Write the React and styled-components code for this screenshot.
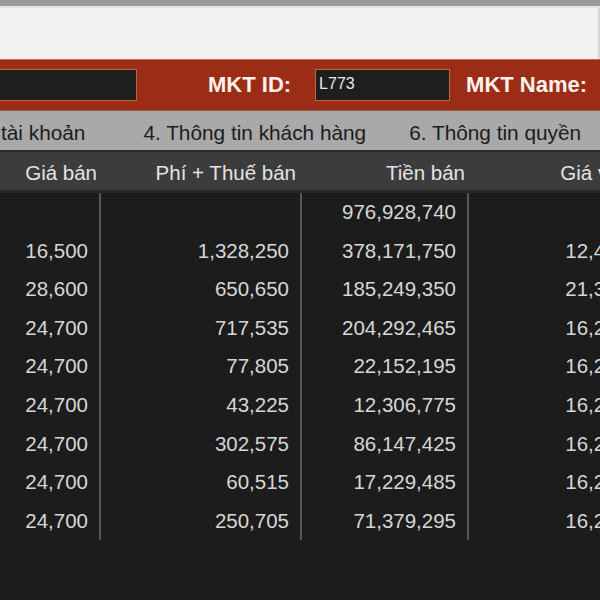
import React from 'react';
import styled, { createGlobalStyle } from 'styled-components';

const GlobalStyle = createGlobalStyle`
  html, body {
    margin: 0;
    padding: 0;
    background: #1c1c1c;
    overflow: hidden;
  }
  body {
    font-family: "Liberation Sans", Arial, sans-serif;
  }
`;

const Screen = styled.div`
  width: 600px;
  height: 600px;
  overflow: hidden;
  background: #1c1c1c;
  display: flex;
  flex-direction: column;
`;

const TopEdge = styled.div`
  height: 6px;
  background: #9c9c9c;
  border-bottom: 2px solid #e4e4e4;
`;

const BlankPane = styled.div`
  height: 51px;
  background: #f1f1f1;
  border-right: 2px solid #d6d6d6;
`;

const InfoBar = styled.div`
  height: 50px;
  background: #9b2d16;
  border-top: 1px solid #c0694f;
  display: flex;
  align-items: center;
`;

const Field = styled.div`
  width: ${p => p.$width}px;
  height: 32px;
  margin-left: ${p => p.$offset || 0}px;
  flex-shrink: 0;
  box-sizing: border-box;
  background: #1e1e1e;
  border: 1px solid #b9683f;
  color: #e8e8e8;
  font-size: 16px;
  line-height: 28px;
  padding-left: 3px;
`;

const Label = styled.span`
  margin-left: ${p => p.$gap}px;
  flex-shrink: 0;
  color: #fff2ec;
  font-weight: bold;
  font-size: 22px;
  white-space: nowrap;
`;

const TabStrip = styled.div`
  height: 42px;
  box-sizing: border-box;
  padding-top: 5px;
  background: #a9a9a9;
  border-top: 1px solid #8a5a4a;
  border-bottom: 2px solid #2b2b2b;
  display: flex;
  align-items: center;
`;

const Tab = styled.span`
  margin-left: ${p => p.$gap}px;
  flex-shrink: 0;
  color: #1c1c1c;
  font-size: 20.8px;
  white-space: nowrap;
`;

const Grid = styled.div`
  display: grid;
  grid-template-columns: 101px 201px 167px 170px;
  width: 639px;
`;

const HeadCell = styled.div`
  height: 38px;
  overflow: hidden;
  background: #3c3c3c;
  color: #e4e4e4;
  font-size: 20.5px;
  line-height: 42px;
  text-align: right;
  padding-right: ${p => p.$pad}px;
  white-space: nowrap;
  border-bottom: 3px solid #262626;
`;

const Cell = styled.div`
  height: 38.6px;
  color: #d6d6d6;
  font-size: 20.5px;
  line-height: 38.6px;
  text-align: right;
  padding-right: 11px;
  white-space: nowrap;
  border-right: ${p => (p.$last ? 'none' : '2px solid #565656')};
`;

const headers = [
  { label: 'Giá bán', pad: 4 },
  { label: 'Phí + Thuế bán', pad: 6 },
  { label: 'Tiền bán', pad: 4 },
  { label: 'Giá vốn', pad: 8 },
];

const rows = [
  ['', '', '976,928,740', ''],
  ['16,500', '1,328,250', '378,171,750', '12,450'],
  ['28,600', '650,650', '185,249,350', '21,350'],
  ['24,700', '717,535', '204,292,465', '16,250'],
  ['24,700', '77,805', '22,152,195', '16,250'],
  ['24,700', '43,225', '12,306,775', '16,250'],
  ['24,700', '302,575', '86,147,425', '16,250'],
  ['24,700', '60,515', '17,229,485', '16,250'],
  ['24,700', '250,705', '71,379,295', '16,250'],
];

export default function App() {
  return (
    <Screen>
      <GlobalStyle />
      <TopEdge />
      <BlankPane />
      <InfoBar>
        <Field $width={141} $offset={-4} />
        <Label $gap={71}>MKT ID:</Label>
        <Field $width={135} $offset={24}>L773</Field>
        <Label $gap={16}>MKT Name:</Label>
      </InfoBar>
      <TabStrip>
        <Tab $gap={1}>tài khoản</Tab>
        <Tab $gap={58}>4. Thông tin khách hàng</Tab>
        <Tab $gap={43}>6. Thông tin quyền</Tab>
      </TabStrip>
      <Grid>
        {headers.map(h => (
          <HeadCell key={h.label} $pad={h.pad}>{h.label}</HeadCell>
        ))}
        {rows.map((row, i) =>
          row.map((v, j) => (
            <Cell key={`${i}-${j}`} $last={j === 3}>{v}</Cell>
          ))
        )}
      </Grid>
    </Screen>
  );
}
